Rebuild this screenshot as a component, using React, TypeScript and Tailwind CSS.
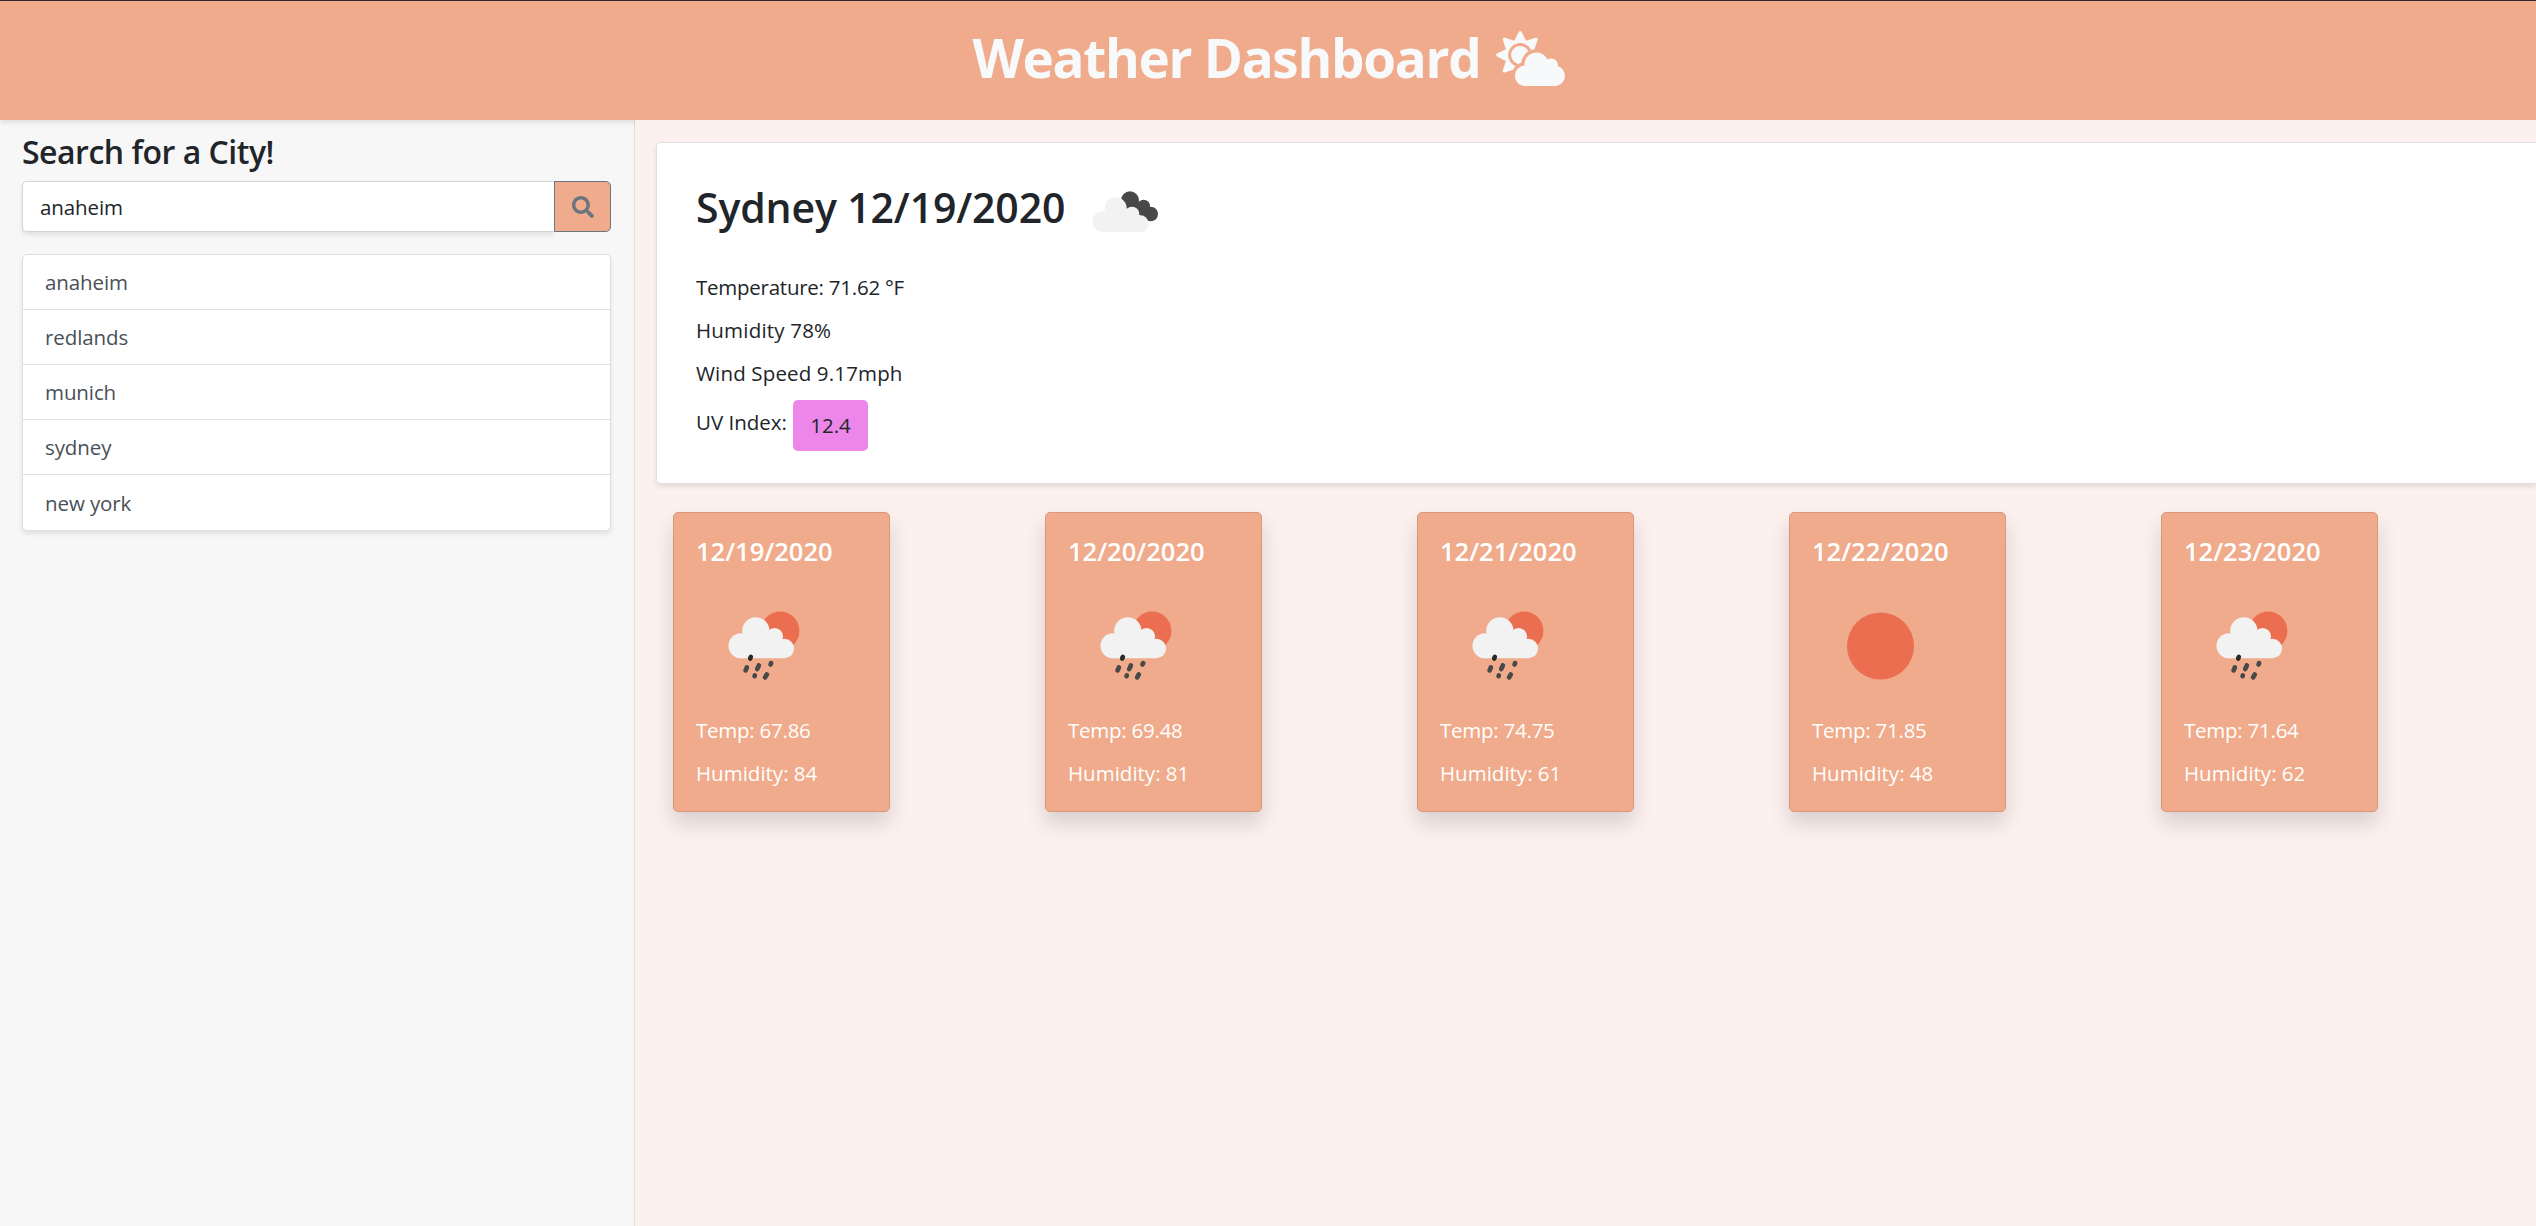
import { FaCloudSun, FaSearch } from "react-icons/fa";

const cities = ["anaheim", "redlands", "munich", "sydney", "new york"];

type Day = { date: string; icon: "rain" | "sun"; temp: string; humidity: string };

const days: Day[] = [
  { date: "12/19/2020", icon: "rain", temp: "67.86", humidity: "84" },
  { date: "12/20/2020", icon: "rain", temp: "69.48", humidity: "81" },
  { date: "12/21/2020", icon: "rain", temp: "74.75", humidity: "61" },
  { date: "12/22/2020", icon: "sun", temp: "71.85", humidity: "48" },
  { date: "12/23/2020", icon: "rain", temp: "71.64", humidity: "62" },
];

function RainIcon() {
  return (
    <svg viewBox="138 271 400 400" className="block size-[133px]">
      <circle cx="391" cy="424" r="58" fill="#eb6e50" />
      <g fill="#f2f2f2">
        <circle cx="273" cy="469" r="37.5" />
        <circle cx="318" cy="424" r="41" />
        <circle cx="374" cy="441" r="26" />
        <circle cx="404" cy="477" r="29" />
        <path d="M273 440 L318 420 L374 436 L404 460 V506 H273 Z" />
      </g>
      <g stroke="#484848" strokeWidth="14" strokeLinecap="round">
        <path d="M303 502 L301 507" stroke="#2b2b2b" />
        <path d="M291 534 L287 543" />
        <path d="M327 528 L322 539" />
        <path d="M364 521 L362 525" />
        <path d="M315 558 L314 560" />
        <path d="M351 555 L346 564" />
      </g>
    </svg>
  );
}

function SunIcon() {
  return (
    <svg viewBox="0 0 133 133" className="block size-[133px]">
      <circle cx="68.5" cy="66" r="33.5" fill="#eb6e50" />
    </svg>
  );
}

function BrokenCloudsIcon() {
  return (
    <svg viewBox="30 30 210 135" className="mt-[9px] h-[45px] w-[70px]">
      <g fill="#484848">
        <circle cx="150" cy="64" r="27" />
        <circle cx="191" cy="81" r="19" />
        <circle cx="212" cy="105" r="22" />
        <path d="M150 60 L191 75 L212 100 L205 125 L150 90 Z" />
      </g>
      <g fill="#f2f2f2">
        <circle cx="68" cy="128" r="31" />
        <circle cx="107" cy="88" r="33" />
        <circle cx="156" cy="105" r="22" />
        <circle cx="181" cy="134" r="25" />
        <path d="M68 100 L107 90 L156 100 L181 120 V159 H68 Z" />
      </g>
    </svg>
  );
}

function Sidebar() {
  return (
    <aside className="w-[635px] shrink-0 border-r border-[#dee0e2] bg-[#f7f7f7] pr-[23px] pl-[22px] pt-[12px]">
      <h3 className="mb-[9px] h-10 text-[32px] leading-10 font-semibold tracking-[-0.5px] text-[#212529]">
        Search for a City!
      </h3>
      <div className="flex h-[51px]">
        <div className="flex flex-1 items-center rounded-l-[5px] border border-r-0 border-[#ced4da] bg-white pt-px pl-[17px] text-[20.5px] leading-8 tracking-[-0.1px] text-[#212529] shadow-[0_3px_5px_rgba(0,0,0,0.09)]">
          anaheim
        </div>
        <button className="flex w-[57px] items-center justify-center rounded-r-[5px] border border-[#6c757d] bg-[#efab8b] text-[#6c757d]">
          <FaSearch className="size-[22px]" />
        </button>
      </div>
      <ul className="mt-[22px] divide-y divide-[#dfdfdf] rounded-[5px] border border-[#dfdfdf] bg-white shadow-[0_3px_5px_rgba(0,0,0,0.09)]">
        {cities.map((c) => (
          <li key={c} className="flex h-[55px] items-center pl-[22px] text-[20.5px] leading-8 tracking-[-0.1px] text-[#495057]">
            {c}
          </li>
        ))}
      </ul>
    </aside>
  );
}

function CurrentWeather() {
  return (
    <section className="h-[342px] rounded-l-[5px] border border-r-0 border-[#dfdfe0] bg-white pt-[39px] pl-[39px] text-[20.5px] leading-8 text-[#212529] shadow-[0_3px_5px_rgba(0,0,0,0.09)]">
      <div className="mb-[39px] flex h-[50px] items-center">
        <h2 className="w-[394px] whitespace-nowrap text-[41px] leading-[50px] font-semibold tracking-[-0.15px]">
          Sydney 12/19/2020
        </h2>
        <BrokenCloudsIcon />
      </div>
      <p className="mb-[11px] tracking-[-0.25px]">Temperature: 71.62 °F</p>
      <p className="mb-[11px] tracking-[0.2px]">Humidity 78%</p>
      <p className="mb-[11px] tracking-[0.15px]">Wind Speed 9.17mph</p>
      <div className="flex h-[51px]">
        <span className="mt-[6px] w-[97px] whitespace-nowrap">UV Index:</span>
        <span className="flex w-[75px] items-center justify-center rounded-[5px] bg-[#ec86e9] pb-px">12.4</span>
      </div>
    </section>
  );
}

function DayCard({ day }: { day: Day }) {
  return (
    <article className="h-[300px] w-[217px] rounded-[5px] border border-[#d9987b] bg-[#efab8b] pt-[22px] pl-[22px] text-white shadow-[0_11px_21px_rgba(0,0,0,0.15)]">
      <h5 className="mb-[13px] h-8 text-[25.5px] leading-8 font-semibold">{day.date}</h5>
      {day.icon === "rain" ? <RainIcon /> : <SunIcon />}
      <p className="mt-px mb-[11px] text-[20.5px] leading-8 tracking-[-0.25px]">Temp: {day.temp}</p>
      <p className="text-[20.5px] leading-8">Humidity: {day.humidity}</p>
    </article>
  );
}

export default function App() {
  return (
    <div className="flex h-[1226px] w-[2536px] flex-col overflow-hidden bg-[#f7f7f7] font-['Open_Sans',sans-serif]">
      <header className="z-10 flex h-[120px] shrink-0 justify-center border-t border-[#2b2b2b] bg-[#efab8b] pt-[25px] text-[#f8f9fa] shadow-[0_3px_5px_rgba(0,0,0,0.09)]">
        <h1 className="flex h-16 items-center gap-[16px] pl-[2px] text-[53px] leading-16 font-bold tracking-[-1.3px]">
          Weather Dashboard
          <FaCloudSun className="h-[55px] w-[69px]" />
        </h1>
      </header>
      <div className="flex flex-1">
        <Sidebar />
        <main className="z-20 flex-1 bg-[#fcf1ee] pt-[22px] pl-[21px]">
          <CurrentWeather />
          <div className="mt-[28px] ml-[17px] flex gap-[155px]">
            {days.map((d) => (
              <DayCard key={d.date} day={d} />
            ))}
          </div>
        </main>
      </div>
    </div>
  );
}
